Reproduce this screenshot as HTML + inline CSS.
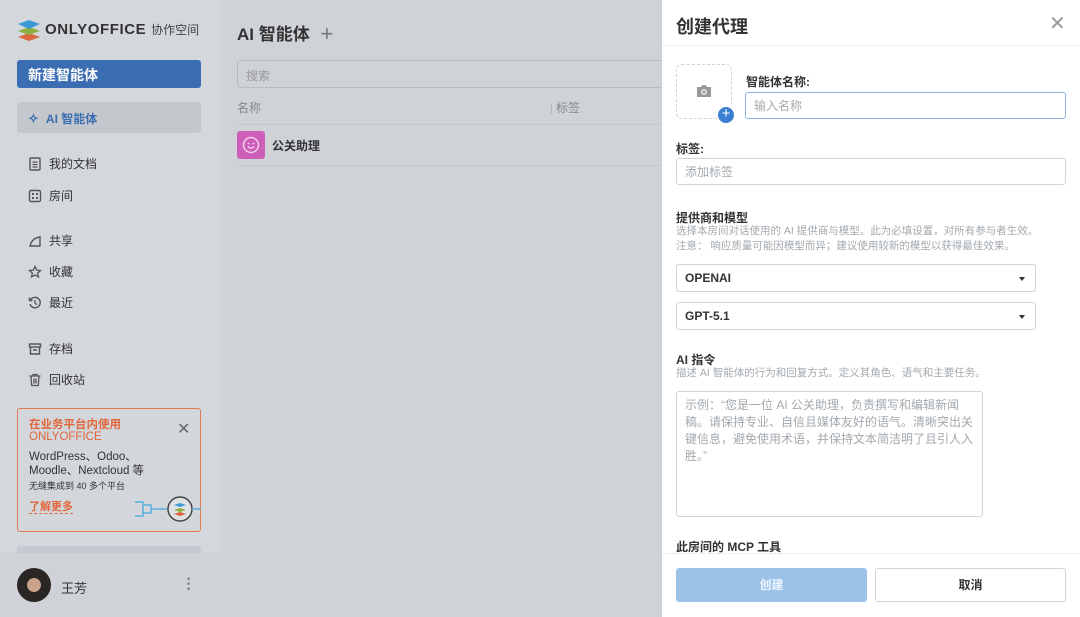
<!DOCTYPE html>
<html><head><meta charset="utf-8"><style>
*{box-sizing:border-box;margin:0;padding:0}
body{width:1080px;height:617px;overflow:hidden;position:relative;font-family:"Liberation Sans","Noto Sans CJK SC",sans-serif;background:#cfd2d6;color:#333}
.abs{position:absolute}
.side{left:0;top:0;width:220px;height:617px;background:#d4d7db}
.nav{left:28px;font-size:12px;color:#333;display:flex;align-items:center;gap:7px}
.nav svg{width:14px;height:14px}
.panel{left:662px;top:0;width:418px;height:617px;background:#fff}
.lbl{font-size:12px;font-weight:bold;color:#333}
.inp{border:1px solid #d0d5da;border-radius:3px;background:#fff;font-size:12px;color:#a3a9ae;padding-left:8px;display:flex;align-items:center}
.hint{font-size:10.5px;color:#a3a9ae;line-height:15px}
.sel{border:1px solid #d0d5da;border-radius:3px;font-size:12px;color:#333;padding-left:8px;display:flex;align-items:center;font-weight:bold}
.sel:after{content:"";position:absolute;right:10px;top:12px;border:3px solid transparent;border-top:4px solid #333}
</style></head><body>
<div class="abs side"></div>
<svg class="abs" style="left:17px;top:19px" width="24" height="22" viewBox="0 0 24 22">
<path d="M12 14 L23 18 L12 22 L1 18Z" fill="#d9663f"/>
<path d="M12 8 L23 12 L12 16 L1 12Z" fill="#8bb03f"/>
<path d="M12 1 L23 5 L12 10 L1 5Z" fill="#3e9ad2"/></svg>
<div class="abs" style="left:45px;top:21px;font-size:15px;font-weight:bold;color:#333;letter-spacing:0.6px;white-space:nowrap">ONLYOFFICE <span style="font-size:12px;font-weight:normal;color:#444;letter-spacing:0">协作空间</span></div>
<div class="abs" style="left:17px;top:60px;width:184px;height:28px;background:#3b6db2;border-radius:3px;color:#fff;font-size:14px;font-weight:bold;padding:5px 0 0 11px">新建智能体</div>
<div class="abs" style="left:17px;top:102px;width:184px;height:31px;background:#c4c8cd;border-radius:3px"></div>
<div class="abs nav" style="top:110px;color:#3b6db2;font-weight:bold"><span style="font-size:13px">✧</span>AI 智能体</div>
<div class="abs nav" style="top:155px"><svg viewBox="0 0 14 14"><rect x="2" y="1" width="10" height="12" rx="1" fill="none" stroke="#555" stroke-width="1.4"/><path d="M4.5 5h5M4.5 7.5h5M4.5 10h5" stroke="#555" stroke-width="1.2"/></svg>我的文档</div>
<div class="abs nav" style="top:187px"><svg viewBox="0 0 14 14"><rect x="1.5" y="1.5" width="11" height="11" rx="1.5" fill="none" stroke="#555" stroke-width="1.4"/><rect x="4" y="4" width="2" height="2" fill="#555"/><rect x="8" y="4" width="2" height="2" fill="#555"/><rect x="4" y="8" width="2" height="2" fill="#555"/><rect x="8" y="8" width="2" height="2" fill="#555"/></svg>房间</div>
<div class="abs nav" style="top:232px"><svg viewBox="0 0 14 14"><path d="M2 12 L12 12 L12 3 Q4 4 2 12Z" fill="none" stroke="#555" stroke-width="1.4"/></svg>共享</div>
<div class="abs nav" style="top:263px"><svg viewBox="0 0 14 14"><path d="M7 1.5l1.7 3.6 3.8.4-2.9 2.6.9 3.8L7 10l-3.5 1.9.9-3.8L1.5 5.5l3.8-.4z" fill="none" stroke="#555" stroke-width="1.3"/></svg>收藏</div>
<div class="abs nav" style="top:294px"><svg viewBox="0 0 14 14"><path d="M2.5 4A5.2 5.2 0 1 1 2 8" fill="none" stroke="#555" stroke-width="1.4"/><path d="M1.5 1.5v3h3" fill="none" stroke="#555" stroke-width="1.4"/><path d="M7 4v3.3l2 1.3" fill="none" stroke="#555" stroke-width="1.3"/></svg>最近</div>
<div class="abs nav" style="top:340px"><svg viewBox="0 0 14 14"><rect x="1.5" y="2" width="11" height="3" fill="none" stroke="#555" stroke-width="1.4"/><path d="M2.5 5v7h9V5M5 8h4" fill="none" stroke="#555" stroke-width="1.4"/></svg>存档</div>
<div class="abs nav" style="top:371px"><svg viewBox="0 0 14 14"><path d="M1.5 3h11M5 3V1.5h4V3M3 3l.7 9.5h6.6L11 3M6 5.5v5M8 5.5v5" fill="none" stroke="#555" stroke-width="1.3"/></svg>回收站</div>
<div class="abs" style="left:17px;top:408px;width:184px;height:124px;border:1px solid #e07a55;border-radius:3px;background:#d3d6da"></div>
<div class="abs" style="left:29px;top:419px;font-size:11.5px;line-height:12px;color:#e0673b;font-weight:bold">在业务平台内使用<br><span style="font-weight:normal">ONLYOFFICE</span></div>
<div class="abs" style="left:177px;top:419px;font-size:16px;color:#666">✕</div>
<div class="abs" style="left:29px;top:450px;font-size:11.5px;line-height:14px;color:#333">WordPress、Odoo、<br>Moodle、Nextcloud 等</div>
<div class="abs" style="left:29px;top:479px;font-size:9px;color:#333">无缝集成到 40 多个平台</div>
<div class="abs" style="left:29px;top:501px;font-size:11px;color:#e0673b;font-weight:bold;border-bottom:1px dashed #e0673b;line-height:12px">了解更多</div>
<svg class="abs" style="left:133px;top:492px" width="68" height="36" viewBox="0 0 68 36"><path d="M2 10h8v14H2M10 13h8v8h-8M18 17h16" fill="none" stroke="#5aaee0" stroke-width="1.5"/><circle cx="47" cy="17" r="12" fill="#dfe2e5" stroke="#444" stroke-width="1.5"/><path d="M47 20l6 2-6 2-6-2z" fill="#d9663f"/><path d="M47 16l6 2-6 2-6-2z" fill="#8bb03f"/><path d="M47 11l6 2-6 2-6-2z" fill="#3e9ad2"/><path d="M59 17h9" stroke="#5aaee0" stroke-width="1.5"/></svg>
<div class="abs" style="left:17px;top:546px;width:184px;height:8px;background:#c3cad4;border-radius:3px 3px 0 0"></div>
<div class="abs" style="left:0;top:553px;width:220px;height:64px;background:#cfd2d6"></div>
<div class="abs" style="left:17px;top:568px;width:34px;height:34px;border-radius:50%;background:radial-gradient(ellipse at 50% 50%,#c9a28c 0 28%,#2a2624 30% 72%,#8c8f88 74%)"></div>
<div class="abs" style="left:61px;top:578px;font-size:13px;color:#333">王芳</div>
<div class="abs" style="left:187px;top:577px;width:4px;line-height:5px;font-size:9px;color:#777">•<br>•<br>•</div>
<div class="abs" style="left:237px;top:20px;font-size:17px;font-weight:bold;color:#333">AI 智能体 <span style="font-weight:normal;color:#777;font-size:22px;margin-left:6px;position:relative;top:1px">+</span></div>
<div class="abs" style="left:237px;top:60px;width:440px;height:28px;border:1px solid #b8bcc1;border-radius:3px;font-size:12px;color:#999;padding:6px 0 0 8px">搜索</div>
<div class="abs" style="left:237px;top:99px;font-size:12px;color:#888">名称</div>
<div class="abs" style="left:550px;top:99px;font-size:12px;color:#888"><span style="color:#aaa;font-size:10px">|</span>  标签</div>
<div class="abs" style="left:237px;top:124px;width:430px;height:1px;background:#c4c7cb"></div>
<div class="abs" style="left:237px;top:131px;width:28px;height:28px;border-radius:3px;background:#cd5fb9"></div>
<svg class="abs" style="left:241px;top:135px" width="20" height="20" viewBox="0 0 20 20"><circle cx="10" cy="10" r="7.5" fill="none" stroke="#f3d3ec" stroke-width="1.4"/><circle cx="7.5" cy="8.5" r="0.9" fill="#f3d3ec"/><circle cx="12.5" cy="8.5" r="0.9" fill="#f3d3ec"/><path d="M6.8 11.5q3.2 3 6.4 0" fill="none" stroke="#f3d3ec" stroke-width="1.3"/></svg>
<div class="abs" style="left:272px;top:137px;font-size:12px;font-weight:bold;color:#333">公关助理</div>
<div class="abs" style="left:237px;top:165px;width:430px;height:1px;background:#c4c7cb"></div>
<div class="abs panel"></div>
<div class="abs" style="left:676px;top:13px;font-size:18px;font-weight:bold;color:#333">创建代理</div>
<div class="abs" style="left:1049px;top:11px;font-size:20px;color:#999">✕</div>
<div class="abs" style="left:662px;top:45px;width:418px;height:1px;background:#eceef1"></div>
<div class="abs" style="left:676px;top:64px;width:56px;height:55px;border:1.5px dashed #d0d5da;border-radius:6px"></div>
<svg class="abs" style="left:696px;top:84px" width="16" height="14" viewBox="0 0 16 14"><path d="M1 3h4l1.5-2h3L11 3h4v10H1z" fill="#999"/><circle cx="8" cy="8" r="2.8" fill="#fff"/><circle cx="8" cy="8" r="1.6" fill="#999"/></svg>
<div class="abs" style="left:717px;top:106px;width:18px;height:18px;border-radius:50%;background:#3b7fd3;border:1.5px solid #fff;color:#fff;font-size:15px;line-height:14px;text-align:center">+</div>
<div class="abs lbl" style="left:746px;top:73px">智能体名称:</div>
<div class="abs inp" style="left:745px;top:92px;width:321px;height:27px;border-color:#8fb4e3">输入名称</div>
<div class="abs lbl" style="left:676px;top:140px">标签:</div>
<div class="abs inp" style="left:676px;top:158px;width:390px;height:27px">添加标签</div>
<div class="abs lbl" style="left:676px;top:209px">提供商和模型</div>
<div class="abs hint" style="left:676px;top:224px">选择本房间对话使用的 AI 提供商与模型。此为必填设置，对所有参与者生效。<br>注意： 响应质量可能因模型而异；建议使用较新的模型以获得最佳效果。</div>
<div class="abs sel" style="left:676px;top:264px;width:360px;height:28px">OPENAI</div>
<div class="abs sel" style="left:676px;top:302px;width:360px;height:28px">GPT-5.1</div>
<div class="abs lbl" style="left:676px;top:351px">AI 指令</div>
<div class="abs hint" style="left:676px;top:366px">描述 AI 智能体的行为和回复方式。定义其角色、语气和主要任务。</div>
<div class="abs" style="left:676px;top:391px;width:307px;height:126px;border:1px solid #d0d5da;border-radius:3px;font-size:12px;color:#a3a9ae;line-height:17px;padding:5px 8px">示例：“您是一位 AI 公关助理，负责撰写和编辑新闻稿。请保持专业、自信且媒体友好的语气。清晰突出关键信息，避免使用术语，并保持文本简洁明了且引人入胜。”</div>
<div class="abs lbl" style="left:676px;top:538px">此房间的 MCP 工具</div>
<div class="abs" style="left:662px;top:553px;width:418px;height:1px;background:#eceef1"></div>
<div class="abs" style="left:676px;top:568px;width:191px;height:34px;background:#9cc2ea;border-radius:3px;color:#eef5fc;font-size:12px;font-weight:bold;text-align:center;line-height:34px">创建</div>
<div class="abs" style="left:875px;top:568px;width:191px;height:34px;border:1px solid #d0d5da;border-radius:3px;color:#333;font-size:12px;font-weight:bold;text-align:center;line-height:32px">取消</div>
</body></html>
